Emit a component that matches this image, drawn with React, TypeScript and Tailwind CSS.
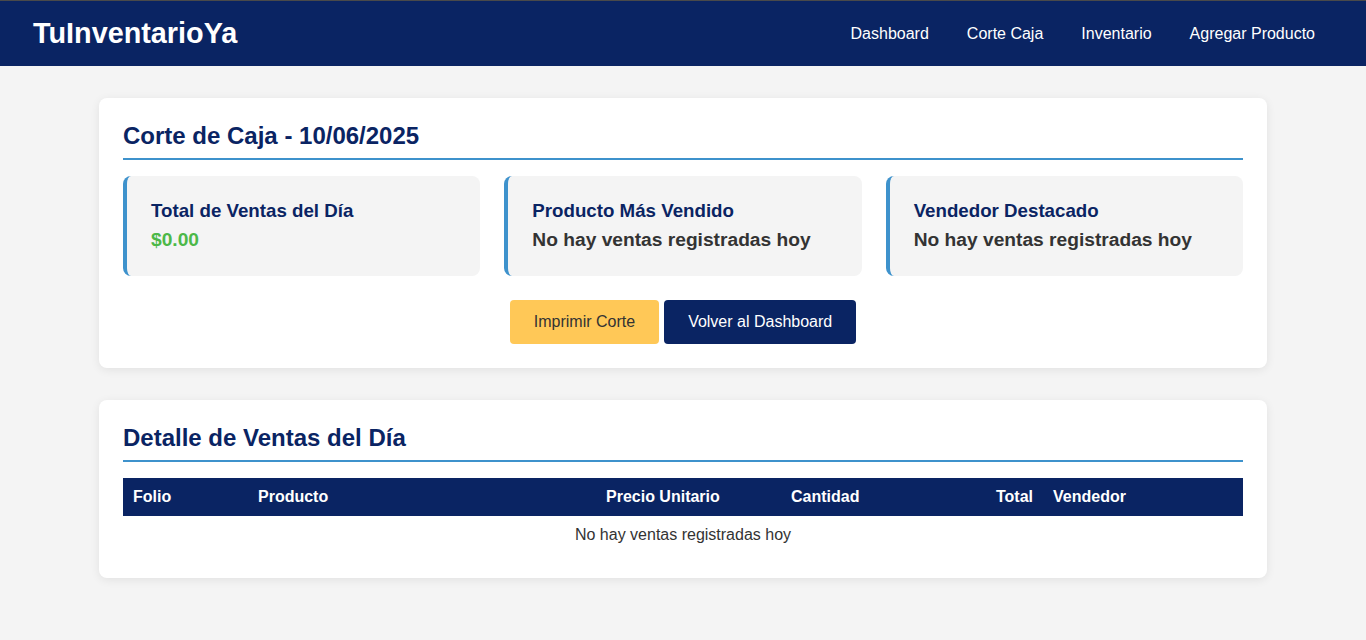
import React from "react";

const font = { fontFamily: '"Liberation Sans", Arial, sans-serif' };

function SummaryBox({ title, value, green }: { title: string; value: string; green?: boolean }) {
  return (
    <div className="flex-1 bg-[#f4f4f4] border-l-4 border-[#3e92cc] rounded-lg px-6 py-6 h-[100px]">
      <h3 className="text-[18.72px] leading-[21px] font-bold text-[#0a2463]">{title}</h3>
      <p className={`mt-[8px] text-[19.2px] leading-[22px] font-bold ${green ? "text-[#4cb848]" : "text-[#333333]"}`}>{value}</p>
    </div>
  );
}

export default function App() {
  return (
    <div style={font} className="min-h-[640px] bg-[#f4f4f4] text-[#333333]">
      <header className="h-[66px] bg-[#0a2463] border-t border-[#4a4a4a] flex items-center justify-between pl-8 pr-8">
        <div className="text-white font-bold text-[28.8px] leading-none pl-px">TuInventarioYa</div>
        <nav className="flex items-center">
          {["Dashboard", "Corte Caja", "Inventario", "Agregar Producto"].map((l) => (
            <a key={l} className="text-white text-[16px] px-[19px] py-2">{l}</a>
          ))}
        </nav>
      </header>

      <main className="w-[1168px] mx-auto pt-8 pb-8 flex flex-col gap-8">
        <section className="bg-white rounded-lg shadow-[0_2px_10px_rgba(0,0,0,0.08)] p-6">
          <h2 className="text-[24px] leading-[28px] font-bold text-[#0a2463] pb-[8px] border-b-2 border-[#3e92cc]">
            Corte de Caja - 10/06/2025
          </h2>
          <div className="mt-4 flex gap-6">
            <SummaryBox title="Total de Ventas del Día" value="$0.00" green />
            <SummaryBox title="Producto Más Vendido" value="No hay ventas registradas hoy" />
            <SummaryBox title="Vendedor Destacado" value="No hay ventas registradas hoy" />
          </div>
          <div className="mt-6 flex justify-center gap-[5px]">
            <button className="h-[44px] px-6 rounded bg-[#ffc857] text-[#333333] text-[16px]">Imprimir Corte</button>
            <button className="h-[44px] px-6 rounded bg-[#0a2463] text-white text-[16px]">Volver al Dashboard</button>
          </div>
        </section>

        <section className="bg-white rounded-lg shadow-[0_2px_10px_rgba(0,0,0,0.08)] p-6">
          <h2 className="text-[24px] leading-[28px] font-bold text-[#0a2463] pb-[8px] border-b-2 border-[#3e92cc]">
            Detalle de Ventas del Día
          </h2>
          <table className="mt-4 w-full border-collapse table-fixed text-[16px]">
            <colgroup>
              <col className="w-[125px]" />
              <col className="w-[348px]" />
              <col className="w-[185px]" />
              <col className="w-[160px]" />
              <col className="w-[102px]" />
              <col className="w-[200px]" />
            </colgroup>
            <thead>
              <tr className="bg-[#0a2463] text-white h-[38px]">
                <th className="text-left font-bold px-[10px]">Folio</th>
                <th className="text-left font-bold px-[10px]">Producto</th>
                <th className="text-left font-bold px-[10px]">Precio Unitario</th>
                <th className="text-left font-bold px-[10px]">Cantidad</th>
                <th className="text-right font-bold px-[10px]">Total</th>
                <th className="text-left font-bold px-[10px]">Vendedor</th>
              </tr>
            </thead>
            <tbody>
              <tr className="h-[38px]">
                <td colSpan={6} className="text-center px-[10px] text-[#333333]">No hay ventas registradas hoy</td>
              </tr>
            </tbody>
          </table>
        </section>
      </main>
    </div>
  );
}
